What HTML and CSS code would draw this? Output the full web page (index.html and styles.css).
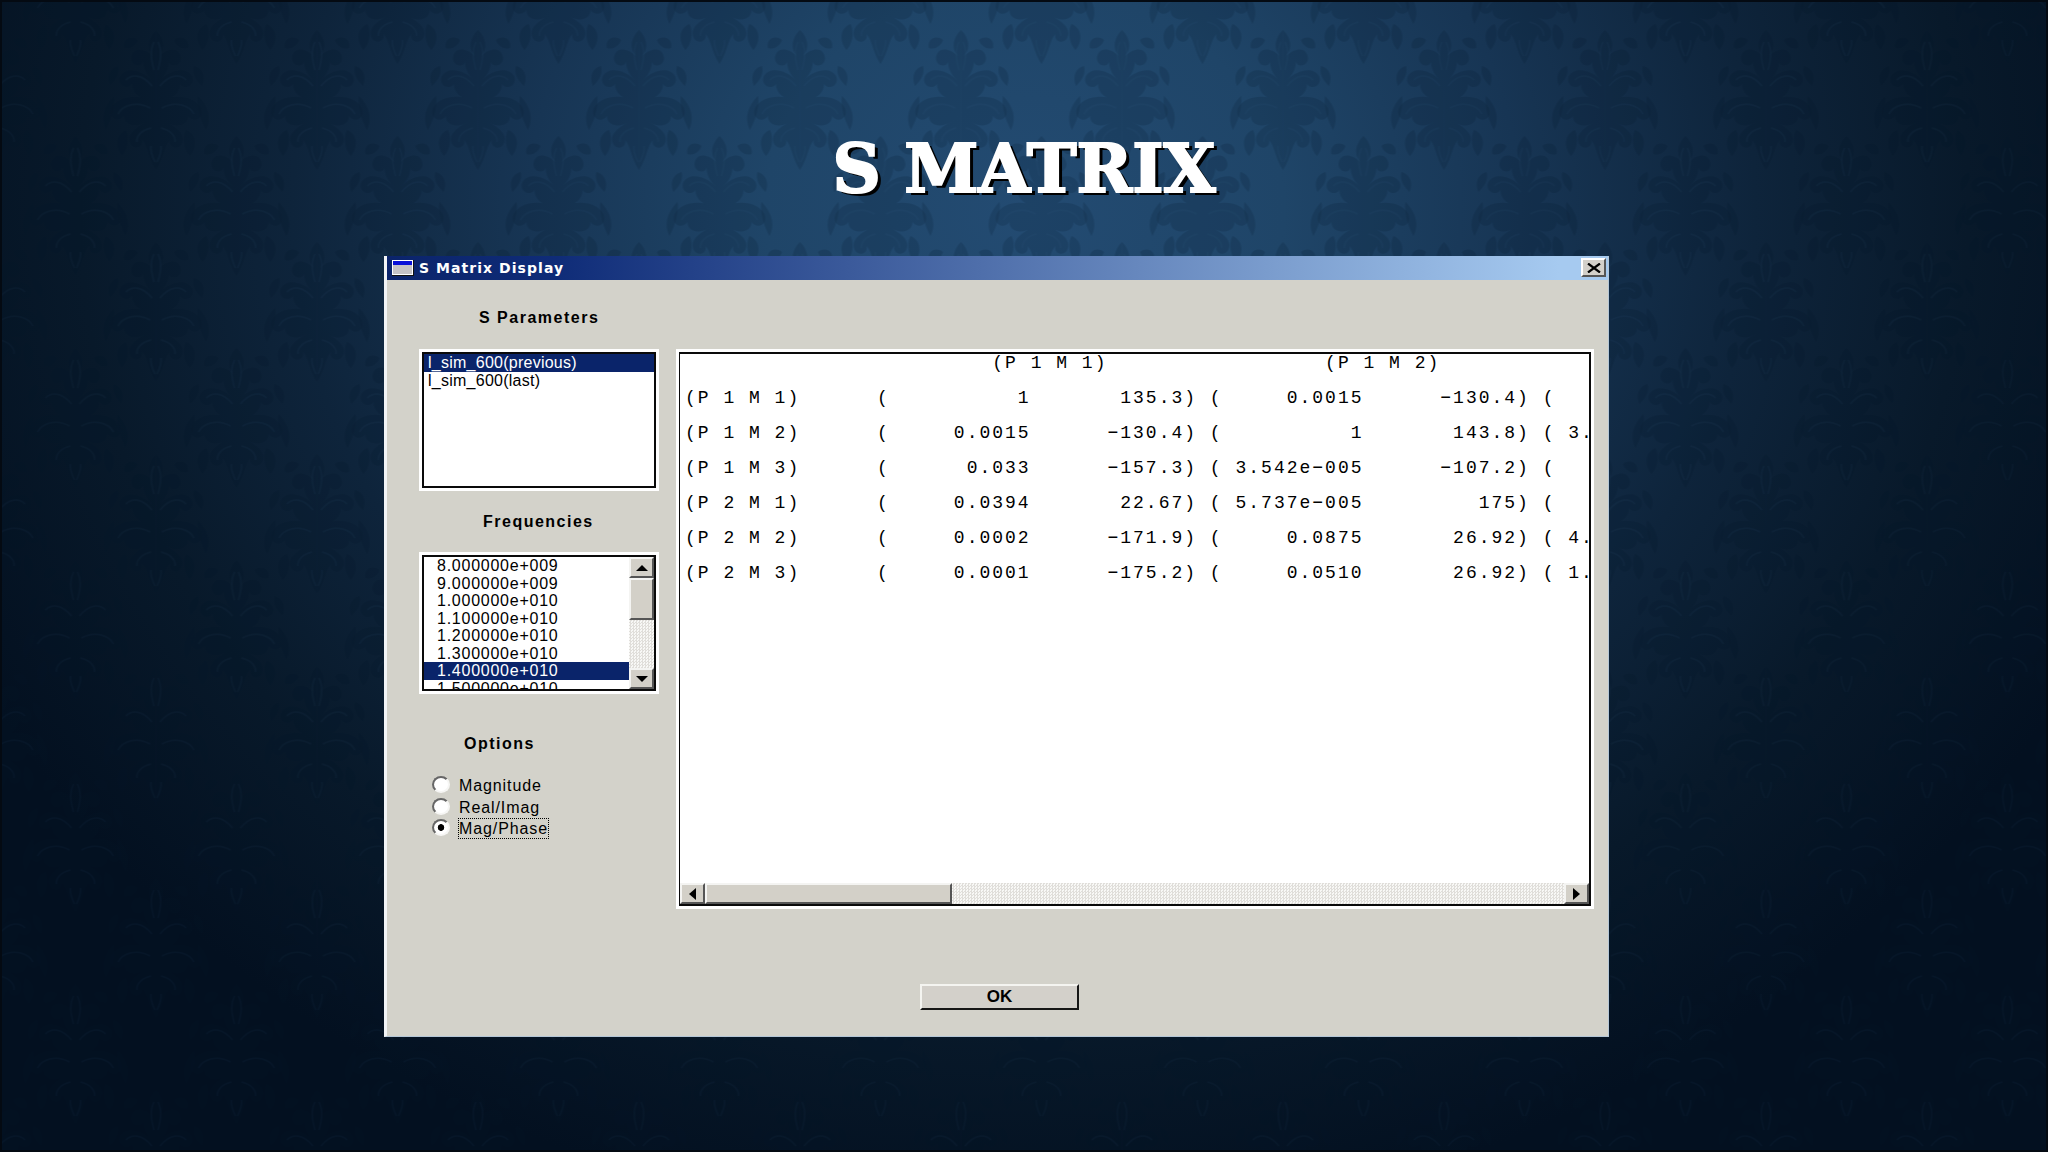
FILE: index.html
```html
<!DOCTYPE html>
<html lang="en">
<head>
  <meta charset="UTF-8">
  <meta name="viewport" content="width=device-width, initial-scale=1.0">
  <title>S Matrix</title>
  <link rel="stylesheet" href="styles.css">
</head>
<body>
  <svg class="damask" width="2048" height="1152" aria-hidden="true">
    <defs>
      <g id="half">
        <path d="M0 -70C8 -62 10 -52 3 -44C14 -54 24 -52 25 -42C25 -34 15 -32 13 -38C12 -28 8 -24 4 -20C14 -30 30 -34 36 -24C40 -15 29 -9 24 -16C24 -6 15 -1 6 0C20 -6 38 -4 45 8C49 18 38 24 32 16C32 26 20 28 10 22C22 28 31 36 25 45C20 51 12 46 14 40C8 46 8 58 0 70Z"/>
        <path d="M42 -4C52 6 56 18 50 30C46 22 40 10 42 -4ZM30 30C40 34 42 46 34 56C28 50 26 38 30 30ZM18 -60C26 -66 34 -60 32 -52C26 -50 20 -54 18 -60ZM38 -34C46 -32 50 -24 46 -14C40 -20 36 -26 38 -34Z"/>
        <path class="vein" d="M2 -58C7 -48 4 -38 2 -30M4 -14C14 -26 24 -26 30 -20M6 8C20 0 34 6 38 14M5 28C14 30 20 36 19 42M5 46C6 52 3 58 1 62"/>
      </g>
      <g id="motif">
        <use href="#half"/>
        <use href="#half" transform="scale(-1 1)"/>
      </g>
      <pattern id="wallpaper" x="719.5" y="-6" width="161" height="212" patternUnits="userSpaceOnUse">
        <use href="#motif" x="80.5" y="106"/>
        <use href="#motif" x="0" y="0"/>
        <use href="#motif" x="161" y="0"/>
        <use href="#motif" x="0" y="212"/>
        <use href="#motif" x="161" y="212"/>
      </pattern>
    </defs>
    <rect width="2048" height="1152" fill="url(#wallpaper)" fill-opacity="1"/>
  </svg>

  <main class="slide">
    <h1>S MATRIX</h1>

    <div class="window">
      <div class="titlebar">
        <svg class="app-icon" width="22" height="16" viewBox="0 0 22 16">
          <rect width="22" height="16" fill="#111"/>
          <rect width="21" height="15" fill="#fff"/>
          <rect x="1" y="1" width="19" height="13" fill="#c6c3c6"/>
          <rect x="1" y="1" width="19" height="4" fill="#0a10d8"/>
        </svg>
        <span class="caption">S Matrix Display</span>
        <button class="close" aria-label="Close">
          <svg width="14" height="10" viewBox="0 0 14 10"><path d="M1 0.5L13 9.5M13 0.5L1 9.5" stroke="#000" stroke-width="2.2"/></svg>
        </button>
      </div>

      <div class="content">
        <div class="sidebar">
          <h2 class="label-params">S Parameters</h2>
          <div class="box params">
            <ul>
              <li class="selected">l_sim_600(previous)</li>
              <li>l_sim_600(last)</li>
            </ul>
          </div>

          <h2 class="label-freq">Frequencies</h2>
          <div class="box freqs">
            <ul>
              <li>8.000000e+009</li>
              <li>9.000000e+009</li>
              <li>1.000000e+010</li>
              <li>1.100000e+010</li>
              <li>1.200000e+010</li>
              <li>1.300000e+010</li>
              <li class="selected">1.400000e+010</li>
              <li>1.500000e+010</li>
            </ul>
            <div class="scroll-v">
              <div class="arrow"><svg width="12" height="6"><path d="M6 0L12 6H0Z"/></svg></div>
              <div class="thumb"></div>
              <div class="track"></div>
              <div class="arrow"><svg width="12" height="6"><path d="M0 0H12L6 6Z"/></svg></div>
            </div>
          </div>

          <h2 class="label-options">Options</h2>
          <div class="options">
            <label><input type="radio" name="format"><span>Magnitude</span></label>
            <label><input type="radio" name="format"><span>Real/Imag</span></label>
            <label><input type="radio" name="format" checked><span class="focused">Mag/Phase</span></label>
          </div>
        </div>

        <div class="box matrix">
          <div class="output">
<pre>                        (P 1 M 1)                 (P 1 M 2)
(P 1 M 1)      (          1       135.3) (     0.0015      −130.4) (
(P 1 M 2)      (     0.0015      −130.4) (          1       143.8) ( 3.
(P 1 M 3)      (      0.033      −157.3) ( 3.542e−005      −107.2) (
(P 2 M 1)      (     0.0394       22.67) ( 5.737e−005         175) (
(P 2 M 2)      (     0.0002      −171.9) (     0.0875       26.92) ( 4.
(P 2 M 3)      (     0.0001      −175.2) (     0.0510       26.92) ( 1.</pre>
          </div>
          <div class="scroll-h">
            <div class="arrow"><svg width="7" height="12"><path d="M7 0V12L0 6Z"/></svg></div>
            <div class="thumb"></div>
            <div class="track"></div>
            <div class="arrow"><svg width="7" height="12"><path d="M0 0L7 6L0 12Z"/></svg></div>
          </div>
        </div>
      </div>

      <button class="ok">OK</button>
    </div>
  </main>
</body>
</html>
```
FILE: styles.css
```css
* {
  box-sizing: border-box;
}
body {
  margin: 0;
  width: 2048px;
  height: 1152px;
  overflow: hidden;
  font-family: "Liberation Sans", Arial, sans-serif;
  color: #000;
  background: radial-gradient(ellipse 1180px 1020px at 1024px 210px, #234b72 0%, #1f4568 22%, #173554 42%, #0e243b 62%, #08192a 80%, #031020 100%);
}

/* wallpaper */
.damask {
  position: absolute;
  top: 0;
  left: 0;
  fill: #04162a;
  fill-opacity: 0.32;
  opacity: 0.5;
}
.damask .vein {
  fill: none;
  stroke: #3a6f96;
  stroke-opacity: 0.12;
  stroke-width: 1.5;
}
.slide {
  position: relative;
  height: 1152px;
  border: 2px solid #040a12;
  display: flex;
  flex-direction: column;
}
h1 {
  margin: 127px 0 0;
  height: 127px;
  line-height: 80px;
  text-align: center;
  font-family: "DejaVu Serif", serif;
  font-size: 67px;
  font-weight: bold;
  color: #fff;
  -webkit-text-stroke: 2px #fff;
  text-shadow: 4px 3px 0 #000;
}

/* window frame */
.window {
  width: 1225px;
  height: 781px;
  margin-left: 382px;
  background: #d3d2ca;
  border-left: 3px solid #f2f4f6;
  border-right: 1px solid #b4c6d6;
  border-bottom: 1px solid #b4c6d6;
  display: flex;
  flex-direction: column;
}
.titlebar {
  height: 24px;
  flex: none;
  display: flex;
  align-items: center;
  padding: 0 2px 0 5px;
  background: linear-gradient(to right, #0b246b 0%, #0f2c78 14%, #a6caf0 96%);
}
.app-icon {
  margin-right: 5px;
}
.caption {
  flex: 1;
  color: #fff;
  font-family: "DejaVu Sans", sans-serif;
  font-size: 14px;
  font-weight: bold;
  letter-spacing: 1.05px;
}
button {
  padding: 0;
  background: #d3d0ca;
  border: 2px solid;
  border-color: #fff #333 #333 #fff;
}
.close {
  width: 25px;
  height: 19px;
  margin-bottom: 1px;
  display: flex;
  align-items: center;
  justify-content: center;
  border-color: #fff #555 #555 #fff;
}

.content {
  display: flex;
  padding: 69px 0 0 32px;
}
.sidebar {
  width: 257px;
  flex: none;
  margin-top: -69px;
}
h2 {
  margin: 0;
  font-size: 16px;
  line-height: 20px;
  letter-spacing: 1.5px;
}
.label-params {
  padding: 28px 0 21px 60px;
}
.label-freq {
  padding: 21px 0 20px 64px;
}
.label-options {
  padding: 40px 0 21px 45px;
}

/* list boxes */
.box {
  background: #fff;
  border: 3px solid #fff;
}
.box ul {
  list-style: none;
  margin: 0;
  padding: 0;
  flex: 1;
}
.params, .freqs {
  width: 240px;
  height: 142px;
}
.params ul {
  height: 136px;
  border: 2px solid #0a0a0a;
}
.freqs {
  display: flex;
}
.freqs ul {
  height: 136px;
  border: 2px solid #0a0a0a;
  border-right: 0;
  overflow: hidden;
}
.box li {
  height: 17.5px;
  line-height: 18px;
  font-size: 16px;
  letter-spacing: 0.6px;
  padding-left: 4px;
  white-space: nowrap;
}
.params li {
  letter-spacing: 0.25px;
}
.freqs li {
  padding-left: 13px;
  letter-spacing: 0.75px;
}
.box .selected {
  background: #0a246a;
  color: #fff;
}

/* scrollbars */
.arrow, .thumb {
  background: #d3d0c8;
  border: 2px solid;
  border-color: #f4f4f2 #555 #555 #f4f4f2;
}
.arrow {
  display: flex;
  align-items: center;
  justify-content: center;
  flex: none;
}
.track {
  flex: 1;
  background: repeating-conic-gradient(#e0deda 0% 25%, #f8f8f6 0% 50%) 0 0 / 3px 3px;
}
.scroll-v {
  width: 27px;
  display: flex;
  flex-direction: column;
  border: 2px solid #0a0a0a;
  border-left: 0;
}
.scroll-v .arrow {
  height: 21px;
}
.scroll-v .thumb {
  height: 42px;
}
.scroll-h {
  height: 23px;
  display: flex;
  border: 1px solid #0a0a0a;
  border-width: 0 2px 2px 1px;
}
.scroll-h .arrow {
  width: 25px;
}
.scroll-h .thumb {
  width: 247px;
}

/* radio buttons */
.options {
  padding-left: 13px;
}
.options label {
  display: flex;
  align-items: center;
  height: 21.5px;
  font-size: 16px;
  letter-spacing: 0.9px;
}
.options input {
  appearance: none;
  width: 18px;
  height: 17px;
  margin: 0 8px 2px 0;
  border: 2px solid;
  border-color: #666 #f6f6f4 #f6f6f4 #666;
  border-radius: 50%;
  background: #fff;
}
.options input:checked {
  background: radial-gradient(circle, #000 3px, #fff 3.6px);
}
.options span {
  line-height: 19px;
  border: 1px solid transparent;
}
.options .focused {
  border: 1px dotted #000;
}

/* matrix output */
.matrix {
  width: 918px;
  height: 560px;
  display: flex;
  flex-direction: column;
}
.output {
  flex: 1;
  padding-left: 5px;
  overflow: hidden;
  border: 1px solid #0a0a0a;
  border-width: 2px 2px 0 1px;
}
.matrix pre {
  margin: -8px 0 0;
  font-family: "Liberation Mono", "Courier New", monospace;
  font-size: 18px;
  line-height: 35px;
  letter-spacing: 2px;
}
.ok {
  width: 159px;
  height: 26px;
  margin: 75px 0 0 533px;
  font-family: "Liberation Sans", Arial, sans-serif;
  font-size: 17px;
  font-weight: bold;
  line-height: 20px;
  border-color: #f4f4f0 #161616 #161616 #f4f4f0;
}
```
